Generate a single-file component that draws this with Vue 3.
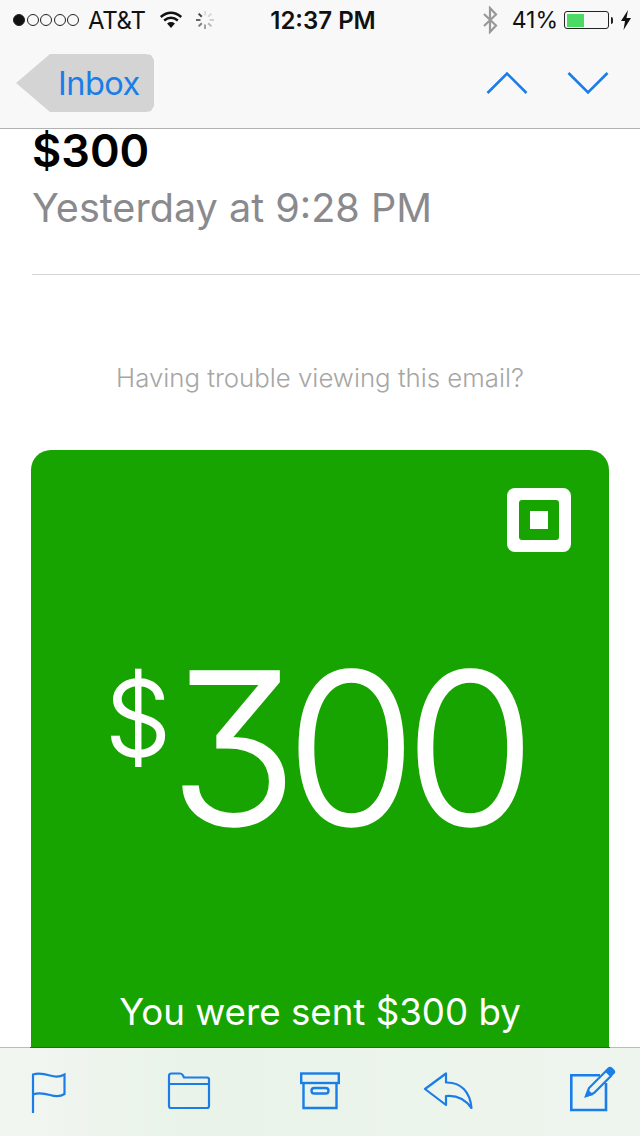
<script setup>
</script>

<template>
  <div class="screen">
    <header class="top">
      <div class="status">
        <div class="status-left">
          <span class="dots"><i class="dot on"></i><i class="dot"></i><i class="dot"></i><i class="dot"></i><i class="dot"></i></span>
          <span class="carrier">AT&amp;T</span>
          <svg class="wifi" width="24" height="18" viewBox="0 0 26 20"><path d="M13 19 L8.6 13.8 Q13 10.6 17.4 13.8 Z" fill="#111"/><path d="M5.4 10.6 Q13 4.4 20.6 10.6" fill="none" stroke="#111" stroke-width="2.8"/><path d="M1.6 6.6 Q13 -2.6 24.4 6.6" fill="none" stroke="#111" stroke-width="2.8"/></svg>
          <svg class="spin" width="20" height="20" viewBox="0 0 20 20" stroke-width="2"><path d="M10 1V5.5" stroke="#dedede"/><path d="M16.4 3.6L13.2 6.8" stroke="#d8d8d8"/><path d="M19 10H14.5" stroke="#d0d0d0"/><path d="M16.4 16.4L13.2 13.2" stroke="#b8b8b8"/><path d="M10 19V14.5" stroke="#a0a0a0"/><path d="M3.6 16.4L6.8 13.2" stroke="#7c7c7c"/><path d="M1 10H5.5" stroke="#666"/><path d="M3.6 3.6L6.8 6.8" stroke="#444"/></svg>
        </div>
        <div class="clock">12:37 PM</div>
        <div class="status-right">
          <svg class="bt" width="16" height="28" viewBox="0 0 16 28"><path d="M2 8 L14 19.5 L8 26 V2 L14 8.5 L2 20" fill="none" stroke="#999" stroke-width="2.2"/></svg>
          <span class="pct">41%</span>
          <span class="battery"><span class="level"></span></span>
          <span class="nub"></span>
          <svg class="bolt" width="12" height="20" viewBox="0 0 12 20"><path d="M8 0 L1 11 H5 L3.5 20 L11 8 H6.5 Z" fill="#111"/></svg>
        </div>
      </div>
      <nav class="nav">
        <a class="back">Inbox</a>
        <div class="arrows">
          <svg width="42" height="24" viewBox="0 0 42 24"><path d="M1.5 22 L21 2.5 L40.5 22" fill="none" stroke="#1a7de8" stroke-width="2.6"/></svg>
          <svg width="42" height="24" viewBox="0 0 42 24"><path d="M1.5 2 L21 21.5 L40.5 2" fill="none" stroke="#1a7de8" stroke-width="2.6"/></svg>
        </div>
      </nav>
    </header>

    <main class="mail">
      <h1 class="subject">$300</h1>
      <p class="when">Yesterday at 9:28 PM</p>
      <hr class="rule" />
      <p class="trouble">Having trouble viewing this email?</p>
      <section class="card">
        <div class="logo-row"><span class="logo"><span class="logo-in"><span class="logo-core"></span></span></span></div>
        <div class="amount"><span class="cur">$</span><span class="num">300</span></div>
        <p class="sent">You were sent $300 by</p>
      </section>
    </main>

    <footer class="bar">
      <svg class="flag" width="36" height="42" viewBox="0 0 36 42" fill="none" stroke="#1a7de8" stroke-width="2.2"><path d="M2 41 V2.5 C8 0.5 14 2 19 3.5 C24 5 29 5 33.5 2.5 V22 C29 25 24 24.5 19 23 C14 21.5 8 20 2 22.5"/></svg>
      <svg class="folder" width="44" height="38" viewBox="0 0 44 38" fill="none" stroke="#1a7de8" stroke-width="2.2" stroke-linejoin="round"><path d="M2 12 V4 Q2 1.5 4.5 1.5 H13 Q15 1.5 16 3.5 L17 5.5 H40 Q42 5.5 42 7.5 V34 Q42 36 40 36 H4 Q2 36 2 34 Z"/><path d="M2 12 H42"/></svg>
      <svg class="archive" width="40" height="38" viewBox="0 0 40 38" fill="none" stroke="#1a7de8" stroke-width="2.4"><rect x="1.2" y="1.5" width="37.6" height="9.5"/><path d="M3.5 11 V36 H36.5 V11"/><rect x="11.5" y="16" width="17" height="5.5" rx="2.7"/></svg>
      <svg class="reply" width="50" height="38" viewBox="0 0 50 38" fill="none" stroke="#1a7de8" stroke-width="2.2" stroke-linejoin="round"><path d="M2 17 L23 1.5 V10.5 C38 10 47 20 48.5 36 C42 27 33 23 23 24 V33 Z"/></svg>
      <svg class="compose" width="46" height="46" viewBox="0 0 46 46" fill="none" stroke="#1a7de8"><path d="M30 9.3 H1.3 V44 H36 V17" stroke-width="2.6"/><path d="M16 30 L19 22 L36 5 L41 10 L24 27 Z" stroke-width="2.2"/><path d="M16 31 L18 23.5 L23.5 29 Z" fill="#1a7de8" stroke="none"/><path d="M38 1.5 Q40 -0.2 42 1.5 L44.5 4 Q46 6 44.5 7.5 L42 10 L35.5 4 Z" fill="#1a7de8" stroke="none"/></svg>
    </footer>
  </div>
</template>

<style>
html, body { margin: 0; background: #fff; }
</style>

<style scoped>
.screen {
  width: 640px;
  height: 1136px;
  display: flex;
  flex-direction: column;
  overflow: hidden;
  background: #fff;
  font-family: Inter, "Liberation Sans", sans-serif;
}
.top {
  flex: none;
  position: relative;
  z-index: 1;
  height: 128px;
  background: #f8f8f8;
  border-bottom: 1px solid #b2b2b2;
}
.status {
  height: 40px;
  padding: 0 8px 0 13px;
  display: grid;
  grid-template-columns: 1fr auto 1fr;
  align-items: center;
  color: #111;
  font-size: 24px;
}
.status-left, .status-right { display: flex; align-items: center; }
.status-right { justify-content: flex-end; }
.dots { display: flex; gap: 1.5px; }
.dot {
  width: 12px;
  height: 12px;
  box-sizing: border-box;
  border: 1px solid #222;
  border-radius: 50%;
}
.dot.on { background: #111; }
.carrier { margin-left: 9px; letter-spacing: -0.3px; }
.wifi { margin-left: 13px; }
.spin { margin-left: 12px; }
.clock { font-weight: 600; margin-left: 1px; }
.pct { margin-left: 14px; font-size: 23px; }
.battery {
  width: 45px;
  height: 18px;
  margin-left: 6px;
  padding: 1.5px;
  box-sizing: border-box;
  border: 1px solid #222;
  border-radius: 3px;
}
.level { display: block; width: 17px; height: 100%; background: #4cd964; }
.nub { width: 2px; height: 7px; margin-left: 2px; background: #222; border-radius: 0 2px 2px 0; }
.bolt { margin-left: 7px; }
.nav {
  height: 88px;
  padding: 14px 31px 0 16px;
  box-sizing: border-box;
  display: flex;
  justify-content: space-between;
  align-items: flex-start;
}
.back {
  width: 138px;
  height: 58px;
  box-sizing: border-box;
  padding-left: 42px;
  line-height: 60px;
  font-size: 32.5px;
  color: #1a7de8;
  letter-spacing: -0.5px;
  background: #d4d4d4;
  clip-path: polygon(34px 0, 130px 0, 135px 1px, 138px 6px, 138px 52px, 135px 57px, 130px 58px, 34px 58px, 0 29px);
}
.arrows { display: flex; gap: 39px; padding-top: 17px; }

.mail {
  flex: 1;
  min-height: 0;
  padding-left: 31px;
  padding-right: 31px;
}
.subject {
  margin: 0 0 0 1px;
  font-size: 45px;
  line-height: 44px;
  font-weight: 600;
  color: #000;
}
.when {
  margin: 7px 0 0 1px;
  font-size: 39.6px;
  line-height: 56px;
  color: #8a8a8e;
}
.rule {
  margin: 38px -31px 0 1px;
  border: 0;
  height: 1px;
  background: #d4d4d4;
}
.trouble {
  margin: 86px 0 0;
  text-align: center;
  font-size: 25.8px;
  line-height: 34px;
  font-weight: 300;
  color: #a6a6a6;
}
.card {
  margin-top: 55px;
  width: 578px;
  height: 640px;
  box-sizing: border-box;
  padding: 38px 38px 0;
  background: #17a400;
  border-radius: 20px 20px 0 0;
  color: #fff;
}
.logo-row { display: flex; justify-content: flex-end; }
.logo {
  width: 64px;
  height: 64px;
  box-sizing: border-box;
  padding: 12px;
  background: #fff;
  border-radius: 8px;
  display: flex;
}
.logo-in {
  flex: 1;
  padding: 11px;
  background: #17a400;
  border-radius: 3px;
  display: flex;
}
.logo-core { flex: 1; background: #fff; }
.amount {
  margin-top: 101px;
  display: flex;
  justify-content: center;
  align-items: flex-start;
  font-weight: 300;
  font-feature-settings: "cv09" 1;
  -webkit-text-stroke: 1.5px #fff;
  line-height: 1;
  padding-right: 11px;
}
.cur { font-size: 104px; margin-top: 13px; margin-right: -2px; }
.num { font-size: 212px; letter-spacing: -12px; line-height: 190px; }
.sent {
  margin: 147px -10px 0;
  text-align: center;
  font-size: 36.7px;
  line-height: 44px;
  font-weight: 400;
}
.bar {
  flex: none;
  position: relative;
  z-index: 1;
  height: 89px;
  box-sizing: border-box;
  padding: 24px 0 0 31px;
  display: flex;
  align-items: flex-start;
  background: linear-gradient(90deg, #f2f6f1, #e9f3e9 30%, #eef5ee);
  border-top: 1px solid;
  border-image: linear-gradient(90deg, #bbb 31px, #117c00 31px, #117c00 609px, #bbb 609px) 1;
}
.folder { margin-left: 100px; }
.archive { margin-left: 89px; }
.reply { margin-left: 83px; }
.compose { margin-left: 97px; margin-top: -6px; }
</style>
